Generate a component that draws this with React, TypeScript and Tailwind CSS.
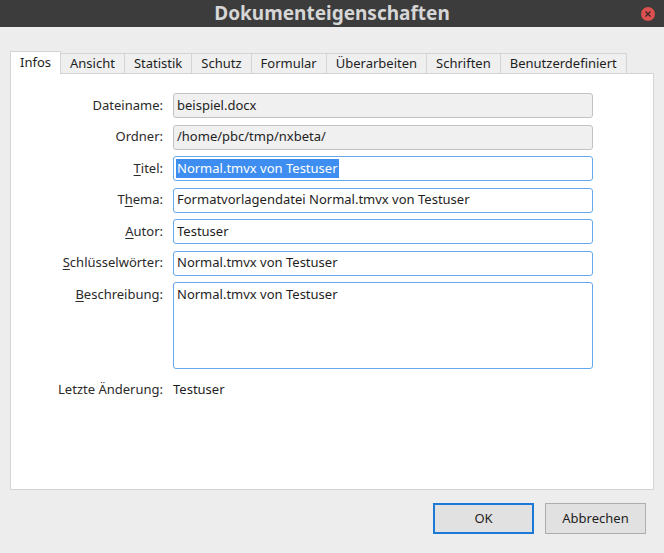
import { ReactNode } from "react";

const font = { fontFamily: '"Noto Sans", "Open Sans", sans-serif' };

const tabs = ["Ansicht", "Statistik", "Schutz", "Formular", "Überarbeiten", "Schriften", "Benutzerdefiniert"];

function Label({ children }: { children: ReactNode }) {
  return <div className="flex h-[25px] items-center justify-end pr-[10px] text-[13px] text-[#2a2a2a]">{children}</div>;
}

function Field({ value, readOnly, selected }: { value: string; readOnly?: boolean; selected?: boolean }) {
  return (
    <div
      className={
        "flex h-[25px] items-center rounded-[3px] border px-[2px] text-[13px] text-[#1e1e1e] " +
        (readOnly ? "border-[#c2c2c2] bg-[#f0f0f0]" : "border-[#64a8ee] bg-white")
      }
    >
      {selected ? <span className="bg-[#3d8ef0] px-[1px] text-white">{value}</span> : <span className="px-[1px]">{value}</span>}
    </div>
  );
}

export default function App() {
  return (
    <div className="flex h-[553px] w-[664px] flex-col bg-[#ededed]" style={font}>
      {/* Fensterleiste */}
      <div className="relative flex h-[27px] items-center justify-center bg-[#3c3c3c]">
        <span className="text-[19px] font-bold text-[#d6d6d6]">Dokumenteigenschaften</span>
        <div className="absolute right-[9px] top-[7px] flex h-[14px] w-[14px] items-center justify-center rounded-full bg-[#dc5050]">
          <svg width="6" height="6" viewBox="0 0 6 6">
            <path d="M0.5 0.5L5.5 5.5M5.5 0.5L0.5 5.5" stroke="#3c2a2a" strokeWidth="1.4" />
          </svg>
        </div>
      </div>

      <div className="flex flex-1 flex-col px-[10px] pt-[23px]">
        {/* Reiter */}
        <div className="flex h-[23px] items-end text-[13px] text-[#1e1e1e]">
          <div className="relative z-10 -mb-px flex h-[23px] w-[51px] items-center justify-center border border-b-0 border-[#d4d4d4] bg-white">
            Infos
          </div>
          {tabs.map((t) => (
            <div
              key={t}
              className="flex h-[20px] items-center border border-b-0 border-l-0 border-[#d4d4d4] bg-[#efefef] px-[9px]"
            >
              {t}
            </div>
          ))}
        </div>

        {/* Inhalt */}
        <div className="flex h-[417px] flex-col border border-[#d4d4d4] bg-white pt-[19px]">
          <div className="grid grid-cols-[162px_420px] gap-y-[6.5px]">
            <Label>Dateiname:</Label>
            <Field value="beispiel.docx" readOnly />
            <Label>Ordner:</Label>
            <Field value="/home/pbc/tmp/nxbeta/" readOnly />
            <Label>
              <span className="underline underline-offset-2">T</span>itel:
            </Label>
            <Field value="Normal.tmvx von Testuser" selected />
            <Label>
              T<span className="underline underline-offset-2">h</span>ema:
            </Label>
            <Field value="Formatvorlagendatei Normal.tmvx von Testuser" />
            <Label>
              <span className="underline underline-offset-2">A</span>utor:
            </Label>
            <Field value="Testuser" />
            <Label>
              <span className="underline underline-offset-2">S</span>chlüsselwörter:
            </Label>
            <Field value="Normal.tmvx von Testuser" />
            <Label>
              <span className="underline underline-offset-2">B</span>eschreibung:
            </Label>
            <div className="h-[87px] rounded-[3px] border border-[#64a8ee] bg-white px-[3px] pt-[2px] text-[13px] text-[#1e1e1e]">
              Normal.tmvx von Testuser
            </div>
          </div>
          <div className="mt-[11px] grid grid-cols-[162px_420px] text-[13px] text-[#1e1e1e]">
            <div className="flex h-[20px] items-center justify-end pr-[10px] text-[#2a2a2a]">Letzte Änderung:</div>
            <div className="flex h-[20px] items-center">Testuser</div>
          </div>
        </div>

        {/* Schaltflächen */}
        <div className="mt-[13px] flex justify-end gap-[11px] pr-[8px] text-[13px] text-[#1e1e1e]">
          <button className="flex h-[31px] w-[101px] items-center justify-center border-2 border-[#1a7ad6] bg-[#e1e1e1]">
            OK
          </button>
          <button className="flex h-[31px] w-[101px] items-center justify-center border border-[#adadad] bg-[#e1e1e1]">
            Abbrechen
          </button>
        </div>
      </div>
    </div>
  );
}
